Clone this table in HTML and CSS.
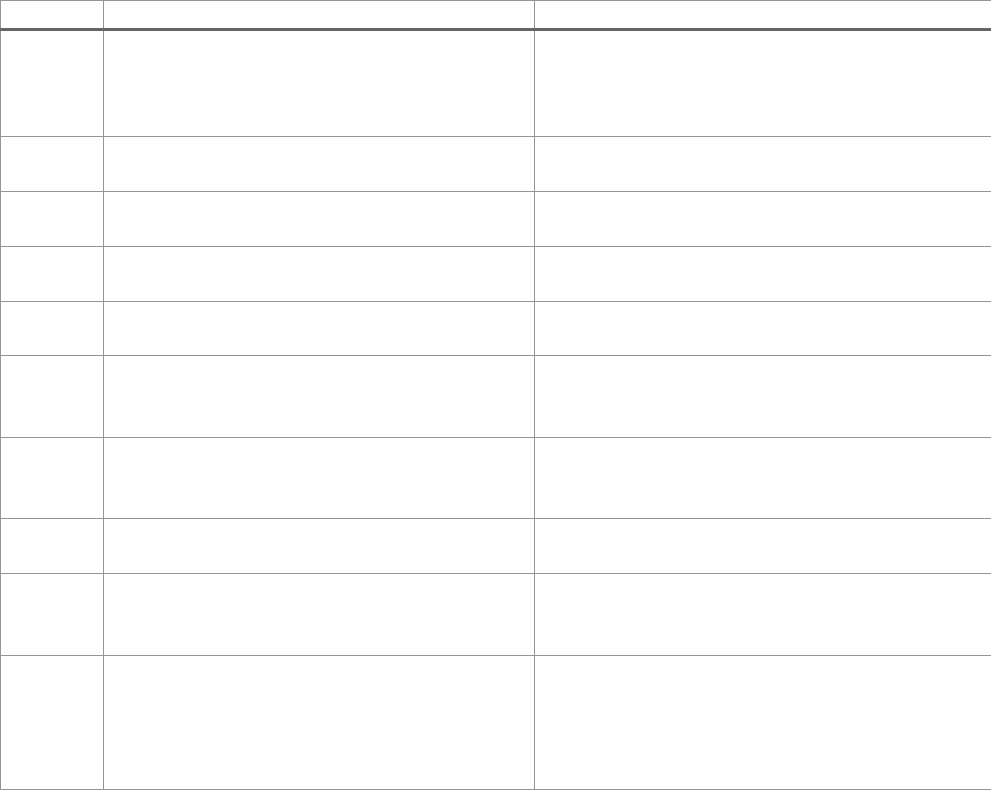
FILE: index.html
```html
<!DOCTYPE html>
<html lang="en">
<head>
<meta charset="utf-8">
<title>Table</title>
<link rel="stylesheet" href="styles.css">
</head>
<body>
<table class="grid">
  <colgroup>
    <col class="c1">
    <col class="c2">
    <col class="c3">
  </colgroup>
  <thead>
    <tr class="h-head"><th></th><th></th><th></th></tr>
  </thead>
  <tbody>
    <tr class="h105"><td></td><td></td><td></td></tr>
    <tr class="h54"><td></td><td></td><td></td></tr>
    <tr class="h54"><td></td><td></td><td></td></tr>
    <tr class="h54"><td></td><td></td><td></td></tr>
    <tr class="h53"><td></td><td></td><td></td></tr>
    <tr class="h81"><td></td><td></td><td></td></tr>
    <tr class="h80"><td></td><td></td><td></td></tr>
    <tr class="h54"><td></td><td></td><td></td></tr>
    <tr class="h81"><td></td><td></td><td></td></tr>
    <tr class="h134"><td></td><td></td><td></td></tr>
  </tbody>
</table>
</body>
</html>
```

FILE: styles.css
```css
html, body {
  margin: 0;
  padding: 0;
  background: #ffffff;
  font-family: "Liberation Sans", Arial, sans-serif;
}
.grid {
  border-collapse: collapse;
  table-layout: fixed;
  width: 991px;
}
.c1 { width: 103px; }
.c2 { width: 431px; }
.c3 { width: 457px; }
.grid th,
.grid td {
  border: 1px solid #949494;
  padding: 0;
}
.grid thead th {
  border-bottom: 3px solid #666666;
}
.h-head th { height: 27px; }
.h105 td { height: 105px; }
.h54 td { height: 54px; }
.h53 td { height: 53px; }
.h81 td { height: 81px; }
.h80 td { height: 80px; }
.h134 td { height: 133px; }
```
